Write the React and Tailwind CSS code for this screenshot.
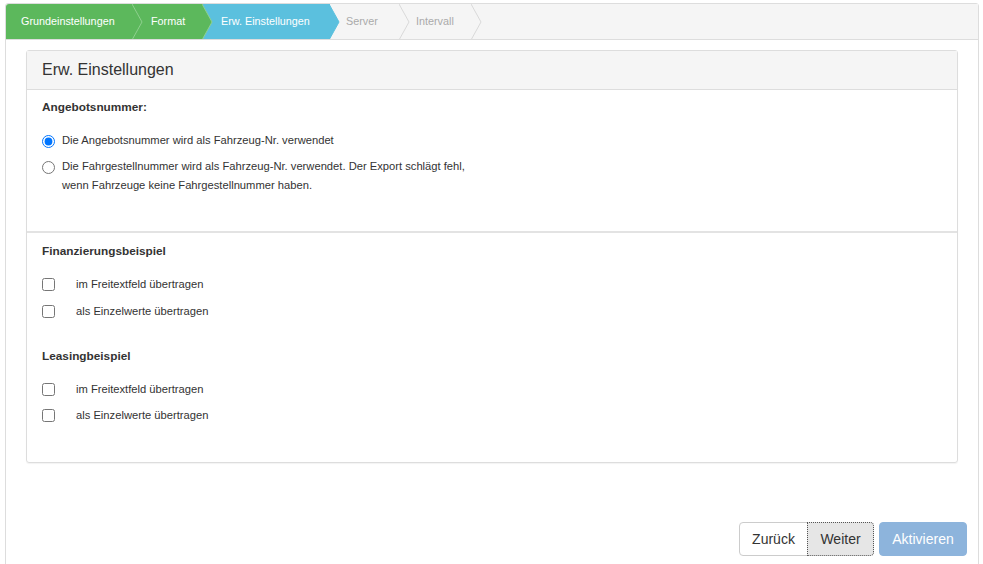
import { useState } from 'react';

const STEPS = [
  { label: 'Grundeinstellungen', w: 'w-[127px]', pl: 'pl-[15px]', state: 'done' },
  { label: 'Format', w: 'w-[70px]', pl: 'pl-[18px]', state: 'done' },
  { label: 'Erw. Einstellungen', w: 'w-[127px]', pl: 'pl-[18px]', state: 'active' },
  { label: 'Server', w: 'w-[70px]', pl: 'pl-[16px]', state: 'todo' },
  { label: 'Intervall', w: 'w-[72px]', pl: 'pl-[16px]', state: 'todo' },
];

const FILL = { done: '#5cb85c', active: '#5bc0de', todo: '#f5f5f5' };
const LINE = { done: '#8fd08f', active: '#5bc0de', todo: '#d9d9d9' };

function Step({ step, z }) {
  const bg =
    step.state === 'done' ? 'bg-[#5cb85c] text-white' : step.state === 'active' ? 'bg-[#5bc0de] text-white' : 'bg-[#f5f5f5] text-[#aaaaaa]';
  return (
    <div className={`relative h-full flex items-center shrink-0 ${step.w} ${step.pl} ${bg}`} style={{ zIndex: z }}>
      <span className="text-[10.8px]">{step.label}</span>
      {/* arrow tip */}
      <svg className="absolute top-0 right-[-10px]" width="11" height="36" viewBox="0 0 11 36">
        <polygon points="0,0 10,18 0,36" fill={FILL[step.state]} />
        <polyline points="0,0 10,18 0,36" fill="none" stroke={LINE[step.state]} strokeWidth="1" />
      </svg>
    </div>
  );
}

function Radio({ checked, children }) {
  return (
    <label className="flex items-start gap-[7px]">
      <input type="radio" name="nr" defaultChecked={checked} className="mt-[1px] w-[13px] h-[13px] m-0 accent-[#0075ff] shrink-0" />
      <span className="leading-[19px] -mt-[3px]">{children}</span>
    </label>
  );
}

function Check({ children }) {
  return (
    <label className="flex items-center h-[13px]">
      <input type="checkbox" className="w-[13px] h-[13px] m-0 shrink-0" />
      <span className="ml-[21px]">{children}</span>
    </label>
  );
}

export default function App() {
  const [step] = useState(2);
  return (
    <div className="w-[983px] h-[564px] bg-white overflow-hidden pt-[3px] pl-[5px] pr-[4px] font-['Liberation_Sans',Arial,sans-serif] text-[#333]">
      <div className="h-[600px] border border-[#dddddd] rounded-t-[3px] flex flex-col">
        {/* wizard */}
        <div className="h-[36px] bg-[#f5f5f5] border-b border-[#dddddd] flex items-stretch overflow-hidden rounded-tl-[3px]">
          {STEPS.map((s, i) => (
            <Step key={s.label} step={s} z={10 - i} />
          ))}
        </div>

        <div className="px-[20px] pt-[10px]">
          <div className="border border-[#dddddd] rounded-[3px] h-[413px] shadow-[0_1px_1px_rgba(0,0,0,0.05)]">
            <div className="h-[39px] bg-[#f5f5f5] border-b border-[#dddddd] px-[15px] flex items-center">
              <h3 className="text-[16px] text-[#333] -mt-[1px]">Erw. Einstellungen</h3>
            </div>

            <div className="px-[15px] pt-[10px] text-[11.2px] h-[141px]">
              <div className="font-bold text-[11.8px] h-[14px] leading-[14px]">Angebotsnummer:</div>
              <div className="mt-[20px] flex flex-col gap-[10px]">
                <Radio checked>Die Angebotsnummer wird als Fahrzeug-Nr. verwendet</Radio>
                <Radio>
                  Die Fahrgestellnummer wird als Fahrzeug-Nr. verwendet. Der Export schlägt fehl,
                  <br />
                  wenn Fahrzeuge keine Fahrgestellnummer haben.
                </Radio>
              </div>
            </div>

            <div className="h-[2px] bg-[#e3e3e3]" />

            <div className="px-[15px] pt-[11px] text-[11.2px]">
              <div className="font-bold text-[11.8px] h-[14px] leading-[14px]">Finanzierungsbeispiel</div>
              <div className="mt-[20px] flex flex-col gap-[14px]">
                <Check>im Freitextfeld übertragen</Check>
                <Check>als Einzelwerte übertragen</Check>
              </div>
              <div className="font-bold text-[11.8px] h-[14px] leading-[14px] mt-[31px]">Leasingbeispiel</div>
              <div className="mt-[20px] flex flex-col gap-[13px]">
                <Check>im Freitextfeld übertragen</Check>
                <Check>als Einzelwerte übertragen</Check>
              </div>
            </div>
          </div>
        </div>

        <div className="flex justify-end pr-[11px] mt-[59px]">
          <div className="flex">
            <button className="h-[34px] w-[69px] border border-[#cccccc] rounded-l-[4px] bg-white text-[14px] text-[#333]">
              Zurück
            </button>
            <button className="h-[34px] w-[67px] border border-dotted border-[#555] rounded-r-[4px] bg-[#e6e6e6] text-[14px] text-[#333] -ml-px">
              Weiter
            </button>
          </div>
          <button
            disabled={step === 2}
            className="ml-[5px] h-[34px] w-[88px] rounded-[4px] bg-[#8db4dc] text-white text-[14px] border border-[#8db4dc]"
          >
            Aktivieren
          </button>
        </div>
      </div>
    </div>
  );
}
